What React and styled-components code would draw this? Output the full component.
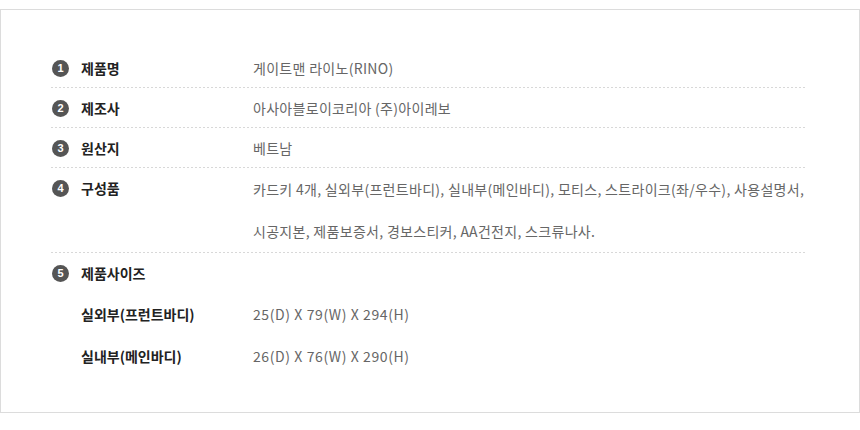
import React from "react";
import styled, { createGlobalStyle } from "styled-components";

const GlobalStyle = createGlobalStyle`
  body {
    margin: 0;
    background: #fff;
    font-family: "Noto Sans CJK KR", "Noto Sans", sans-serif;
  }
`;

const Box = styled.div`
  margin-top: 9px;
  width: 860px;
  height: 404px;
  box-sizing: border-box;
  border: 1px solid #dcdcdc;
  padding: 38px 53px 0 50px;
`;

const Row = styled.div`
  display: flex;
  align-items: flex-start;
  background-image: ${(p) =>
    p.$last
      ? "none"
      : "repeating-linear-gradient(to right, #d8d8d8 0 2px, transparent 2px 4px)"};
  background-size: 100% 1px;
  background-position: left bottom;
  background-repeat: no-repeat;
`;

const Label = styled.div`
  display: flex;
  align-items: center;
  width: 202px;
  flex-shrink: 0;
  height: 40px;
  font-size: 14px;
  font-weight: bold;
  color: #222;
`;

const Num = styled.span`
  width: 17px;
  height: 17px;
  border-radius: 50%;
  background: #555;
  color: #fff;
  font-family: "Liberation Sans", Arial, sans-serif;
  font-size: 11px;
  font-weight: bold;
  display: flex;
  align-items: center;
  justify-content: center;
  margin: 0 12px 0 1px;
`;

const Value = styled.div`
  flex: 1;
  font-size: 14px;
  letter-spacing: 0.3px;
  color: #666;
  line-height: ${(p) => (p.$multi ? "42px" : "40px")};
  padding-bottom: ${(p) => (p.$multi ? "1px" : "0")};
`;

const SubRow = styled.div`
  display: flex;
  align-items: center;
  height: 42px;
  font-size: 14px;
`;

const SubLabel = styled.div`
  width: 172px;
  padding-left: 30px;
  font-weight: bold;
  color: #222;
`;

const SubValue = styled.div`
  color: #666;
  letter-spacing: 0.6px;
`;

const rows = [
  { n: 1, label: "제품명", value: "게이트맨 라이노(RINO)" },
  { n: 2, label: "제조사", value: "아사아블로이코리아 (주)아이레보" },
  { n: 3, label: "원산지", value: "베트남" },
  {
    n: 4,
    label: "구성품",
    value: [
      "카드키 4개, 실외부(프런트바디), 실내부(메인바디), 모티스, 스트라이크(좌/우수), 사용설명서,",
      "시공지본, 제품보증서, 경보스티커, AA건전지, 스크류나사.",
    ],
  },
];

const sizes = [
  { label: "실외부(프런트바디)", value: "25(D) X 79(W) X 294(H)" },
  { label: "실내부(메인바디)", value: "26(D) X 76(W) X 290(H)" },
];

export default function App() {
  return (
    <>
      <GlobalStyle />
      <Box>
        {rows.map((r) => (
          <Row key={r.n}>
            <Label>
              <Num>{r.n}</Num>
              {r.label}
            </Label>
            {Array.isArray(r.value) ? (
              <Value $multi>
                {r.value.map((line) => (
                  <div key={line}>{line}</div>
                ))}
              </Value>
            ) : (
              <Value>{r.value}</Value>
            )}
          </Row>
        ))}
        <Row $last>
          <Label>
            <Num>5</Num>
            제품사이즈
          </Label>
        </Row>
        {sizes.map((s) => (
          <SubRow key={s.label}>
            <SubLabel>{s.label}</SubLabel>
            <SubValue>{s.value}</SubValue>
          </SubRow>
        ))}
      </Box>
    </>
  );
}
